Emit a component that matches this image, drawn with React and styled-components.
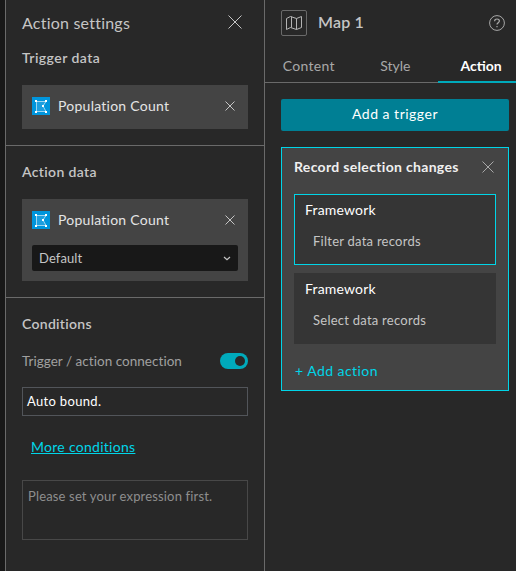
import React from 'react';
import styled, { createGlobalStyle } from 'styled-components';

const GlobalStyle = createGlobalStyle`
    html, body {
        margin: 0;
        padding: 0;
        background: #282828;
    }
    *, *::before, *::after {
        box-sizing: border-box;
    }
    body, button, input, textarea {
        font-family: Lato, 'Open Sans', sans-serif;
    }
`;

const Root = styled.div`
    display: flex;
    width: 516px;
    height: 571px;
    overflow: hidden;
    background: #282828;
    color: #c5c5c5;
    white-space: nowrap;
`;

const Gutter = styled.div`
    flex: 0 0 5px;
    background: #181818;
`;

const Settings = styled.section`
    flex: 0 0 259px;
    border-left: 1px solid #6a6a6a;
`;

const Header = styled.header`
    display: flex;
    align-items: center;
    justify-content: space-between;
    height: 45px;
    margin-bottom: 3px;
    padding: 0 6px 1px 0;
`;

const Title = styled.h1`
    margin: 0;
    padding-top: 2px;
    font-size: 16px;
    font-weight: 400;
    line-height: 20px;
    letter-spacing: 0.22px;
`;

const Section = styled.div`
    height: ${({ $height }) => $height}px;
    padding: ${({ $top }) => $top || 0}px 16px 0;
    border-bottom: ${({ $last }) => ($last ? 'none' : '1px solid #6a6a6a')};
`;

const SectionTitle = styled.h2`
    margin: 0 0 17px;
    font-size: 14px;
    font-weight: 600;
    line-height: 20px;
    letter-spacing: ${({ $spacing }) => $spacing || 0}px;
`;

const IconButton = styled.button`
    display: flex;
    padding: 0;
    border: 0;
    background: none;
    color: ${({ $color }) => $color || '#c5c5c5'};
`;

const DataCard = styled.div`
    padding: 0 10px ${({ $bottom }) => $bottom}px;
    background: #444;
`;

const DataRow = styled.div`
    display: flex;
    align-items: center;
    height: 42px;
    padding-right: 3px;
    color: #e4e4e4;
`;

const DataName = styled.span`
    flex: 1;
    padding-left: 8px;
    font-size: 14px;
    line-height: 20px;
    letter-spacing: 0.25px;
`;

const Select = styled.div`
    display: flex;
    align-items: center;
    justify-content: space-between;
    height: 26px;
    margin-top: 4px;
    padding: 0 7px;
    border-radius: 2px;
    background: #181818;
    font-size: 13px;
    letter-spacing: 0.1px;
`;

const Connection = styled.div`
    display: flex;
    align-items: center;
    justify-content: space-between;
    height: 18px;
    margin: 18px 0 17px;
    color: #a0a0a0;
    font-size: 13.5px;
    letter-spacing: 0.03px;
`;

const Switch = styled.span`
    display: flex;
    justify-content: flex-end;
    width: 28px;
    height: 16px;
    padding: 3px;
    border-radius: 8px;
    background: #00aabb;

    &::after {
        content: '';
        width: 10px;
        height: 10px;
        border-radius: 50%;
        background: #282828;
    }
`;

const Bound = styled.div`
    height: 29px;
    padding-left: 4px;
    border: 1px solid #52555a;
    color: #fff;
    font-size: 13px;
    line-height: 27px;
    letter-spacing: 0.33px;
`;

const MoreLink = styled.a`
    display: block;
    width: max-content;
    margin: 21px 0 0 9px;
    color: #00d5e8;
    font-size: 14px;
    line-height: 20px;
    letter-spacing: 0.28px;
    text-decoration: underline;
`;

const Expression = styled.div`
    height: 60px;
    margin-top: 23px;
    padding: 5px;
    border: 1px solid #484848;
    color: #8e8e8e;
    font-size: 13px;
    line-height: 20px;
    letter-spacing: 0.16px;
`;

const Widget = styled.section`
    flex: 1;
    border-left: 1px solid #6a6a6a;
`;

const WidgetHeader = styled.header`
    display: flex;
    align-items: center;
    height: 46px;
    padding: 0 11px 0 16px;
`;

const MapBox = styled.span`
    display: flex;
    align-items: center;
    justify-content: center;
    width: 26px;
    height: 26px;
    border: 1px solid #6a6a6a;
    border-radius: 2px;
`;

const WidgetName = styled.h2`
    flex: 1;
    margin: 0 0 2px 11px;
    font-size: 16px;
    font-weight: 600;
    line-height: 20px;
    letter-spacing: 0.2px;
`;

const Tabs = styled.nav`
    display: flex;
    height: 37px;
    background: linear-gradient(#6a6a6a, #6a6a6a) 0 36px / 100% 1px no-repeat;
`;

const Tab = styled.span`
    flex: ${({ $active }) => ($active ? '0 0 78px' : '1 1 0')};
    padding: 10px 0 0 ${({ $active }) => ($active ? 8 : 1)}px;
    border-bottom: 2px solid ${({ $active }) => ($active ? '#00aabb' : 'transparent')};
    color: ${({ $active }) => ($active ? '#fff' : '#a8a8a8')};
    font-size: 14px;
    font-weight: ${({ $active }) => ($active ? 700 : 400)};
    line-height: 20px;
    letter-spacing: ${({ $spacing }) => $spacing || 0}px;
    text-align: center;
`;

const AddTrigger = styled.button`
    display: block;
    width: 228px;
    height: 32px;
    margin: 16px 0 16px 16px;
    padding: 0 0 3px;
    border: 0;
    border-radius: 2px;
    background: #007f94;
    color: #fff;
    font-size: 14px;
    letter-spacing: 0.5px;
`;

const TriggerCard = styled.div`
    width: 228px;
    height: 244px;
    margin-left: 16px;
    padding: 0 12px;
    border: 1px solid #00d5e8;
    background: #444;
`;

const TriggerHeader = styled.div`
    display: flex;
    align-items: center;
    justify-content: space-between;
    height: 46px;
    padding: 0 2px 8px 0;
`;

const TriggerName = styled.h3`
    margin: 0;
    color: #f0f0f0;
    font-size: 14px;
    font-weight: 700;
    line-height: 20px;
    letter-spacing: 0.32px;
`;

const Message = styled.div`
    height: 71px;
    margin-bottom: 8px;
    padding: 5px 10px;
    border: 1px solid ${({ $active }) => ($active ? '#00d5e8' : '#353535')};
    background: #353535;
    color: #fff;
    font-size: 14px;
    line-height: 20px;
    letter-spacing: 0.18px;
`;

const MessageAction = styled.div`
    margin: 11px 0 0 8px;
    color: #c5c5c5;
    font-size: 13px;
    line-height: 20px;
    letter-spacing: 0.25px;
`;

const AddAction = styled.div`
    margin-top: 17px;
    padding-left: 1px;
    color: #00d5e8;
    font-size: 14px;
    line-height: 20px;
    letter-spacing: 0.45px;
`;

const CloseIcon = ({ size }) => (
    <svg width={size} height={size} viewBox={`0 0 ${size} ${size}`} stroke="currentColor" fill="none">
        <path d={`M.5 .5L${size - 0.5} ${size - 0.5}M${size - 0.5} .5L.5 ${size - 0.5}`} />
    </svg>
);

const PolygonIcon = () => (
    <svg width="18" height="18" viewBox="0 0 18 18">
        <path fill="#0095dc" d="M0 0h18v18H0z" />
        <path d="M4.5 4.5H14L11 9l3 5.5H4.5z" fill="#1d9fdf" stroke="#9bd5f1" />
        <path fill="#fff" d="M3 3h2v2H3zM13 3h2v2h-2zM3 14h2v2H3zM13 14h2v2h-2zM10 8h2v2h-2z" />
    </svg>
);

const MapIcon = () => (
    <svg width="16" height="16" viewBox="0 0 16 16" fill="none" stroke="#b4b4b4" strokeLinejoin="round">
        <path d="M.5 3.5l4-2 6 2 5-2v11l-5 2-6-2-4 2zM5.5 1.5v11M10.5 3.5v11" />
    </svg>
);

const HelpIcon = () => (
    <svg width="16" height="16" viewBox="0 0 16 16" fill="none" stroke="#a8a8a8">
        <circle cx="8" cy="8" r="7.4" />
        <path d="M5.6 6.2C5.6 4.7 6.6 4 8 4s2.4.8 2.4 2.1c0 1.5-2.4 1.8-2.4 3.4M8 11v1.3" strokeWidth="1.2" />
    </svg>
);

const ChevronIcon = () => (
    <svg width="8" height="6" viewBox="0 0 8 6" fill="none" stroke="#c5c5c5" strokeWidth="1.2">
        <path d="M1 2l3 2.7L7 2" />
    </svg>
);

const DataItem = ({ name }) => (
    <DataRow>
        <PolygonIcon />
        <DataName>{name}</DataName>
        <IconButton aria-label="Remove"><CloseIcon size={10} /></IconButton>
    </DataRow>
);

const messages = ['Filter data records', 'Select data records'];

const App = () => (
    <>
        <GlobalStyle />
        <Root>
            <Gutter />
            <Settings>
                <Section $height={146}>
                    <Header>
                        <Title>Action settings</Title>
                        <IconButton aria-label="Close"><CloseIcon size={14} /></IconButton>
                    </Header>
                    <SectionTitle $spacing={0.45}>Trigger data</SectionTitle>
                    <DataCard $bottom={2}>
                        <DataItem name="Population Count" />
                    </DataCard>
                </Section>
                <Section $height={152} $top={16}>
                    <SectionTitle $spacing={0.35}>Action data</SectionTitle>
                    <DataCard $bottom={10}>
                        <DataItem name="Population Count" />
                        <Select>
                            Default
                            <ChevronIcon />
                        </Select>
                    </DataCard>
                </Section>
                <Section $height={273} $top={16} $last>
                    <SectionTitle $spacing={0.3}>Conditions</SectionTitle>
                    <Connection>
                        Trigger / action connection
                        <Switch />
                    </Connection>
                    <Bound>Auto bound.</Bound>
                    <MoreLink>More conditions</MoreLink>
                    <Expression>Please set your expression first.</Expression>
                </Section>
            </Settings>
            <Widget>
                <WidgetHeader>
                    <MapBox><MapIcon /></MapBox>
                    <WidgetName>Map 1</WidgetName>
                    <HelpIcon />
                </WidgetHeader>
                <Tabs>
                    <Tab $spacing={0.3}>Content</Tab>
                    <Tab>Style</Tab>
                    <Tab $active>Action</Tab>
                </Tabs>
                <AddTrigger>Add a trigger</AddTrigger>
                <TriggerCard>
                    <TriggerHeader>
                        <TriggerName>Record selection changes</TriggerName>
                        <IconButton $color="#a8a8a8" aria-label="Remove trigger"><CloseIcon size={12} /></IconButton>
                    </TriggerHeader>
                    {messages.map((message, idx) => (
                        <Message key={message} $active={idx === 0}>
                            Framework
                            <MessageAction>{message}</MessageAction>
                        </Message>
                    ))}
                    <AddAction>+ Add action</AddAction>
                </TriggerCard>
            </Widget>
        </Root>
    </>
);

export default App;
